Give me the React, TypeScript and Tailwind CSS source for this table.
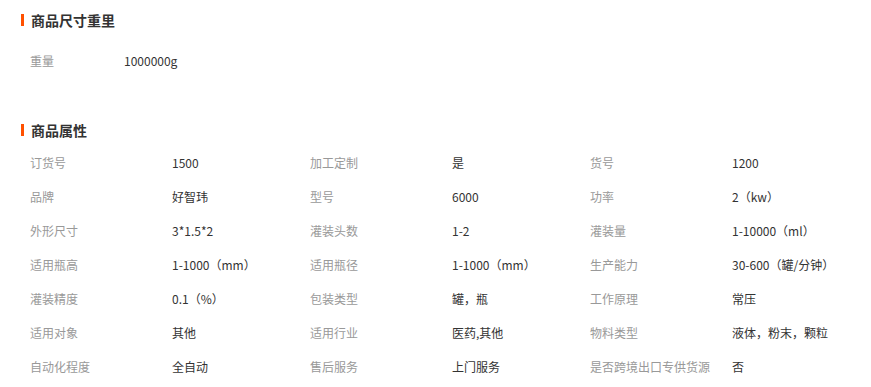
import React from 'react';

const attrs: [string, string][] = [
  ['订货号', '1500'],
  ['加工定制', '是'],
  ['货号', '1200'],
  ['品牌', '好智玮'],
  ['型号', '6000'],
  ['功率', '2（kw）'],
  ['外形尺寸', '3*1.5*2'],
  ['灌装头数', '1-2'],
  ['灌装量', '1-10000（ml）'],
  ['适用瓶高', '1-1000（mm）'],
  ['适用瓶径', '1-1000（mm）'],
  ['生产能力', '30-600（罐/分钟）'],
  ['灌装精度', '0.1（%）'],
  ['包装类型', '罐，瓶'],
  ['工作原理', '常压'],
  ['适用对象', '其他'],
  ['适用行业', '医药,其他'],
  ['物料类型', '液体，粉末，颗粒'],
  ['自动化程度', '全自动'],
  ['售后服务', '上门服务'],
  ['是否跨境出口专供货源', '否'],
];

function Title({ text }: { text: string }) {
  return (
    <div className="flex items-center h-full">
      <span className="w-[3px] h-[12px] bg-[#ff5000] ml-[1px]" />
      <span className="ml-[7px] text-[14px] font-bold text-[#333]">{text}</span>
    </div>
  );
}

export default function App() {
  return (
    <div
      className="w-[871px] h-[387px] bg-white pl-[20px] overflow-hidden"
      style={{ fontFamily: '"Noto Sans CJK SC", "Noto Sans", sans-serif' }}
    >
      {/* 商品尺寸重量 */}
      <div className="h-[34px] mt-[3px]">
        <Title text="商品尺寸重里" />
      </div>
      <div className="flex items-center h-[34px] mt-[7px] pl-[10px] text-[12px]">
        <span className="w-[94px] text-[#999]">重量</span>
        <span className="text-[#333]">1000000g</span>
      </div>

      {/* 商品属性 */}
      <div className="h-[32px] mt-[36px]">
        <Title text="商品属性" />
      </div>
      <div className="grid grid-cols-[280px_280px_280px] pl-[10px] text-[12px]">
        {attrs.map(([k, v]) => (
          <div key={k} className="flex items-center h-[34px]">
            <span className="w-[142px] shrink-0 text-[#999]">{k}</span>
            <span className="text-[#333] whitespace-nowrap">{v}</span>
          </div>
        ))}
      </div>
    </div>
  );
}
